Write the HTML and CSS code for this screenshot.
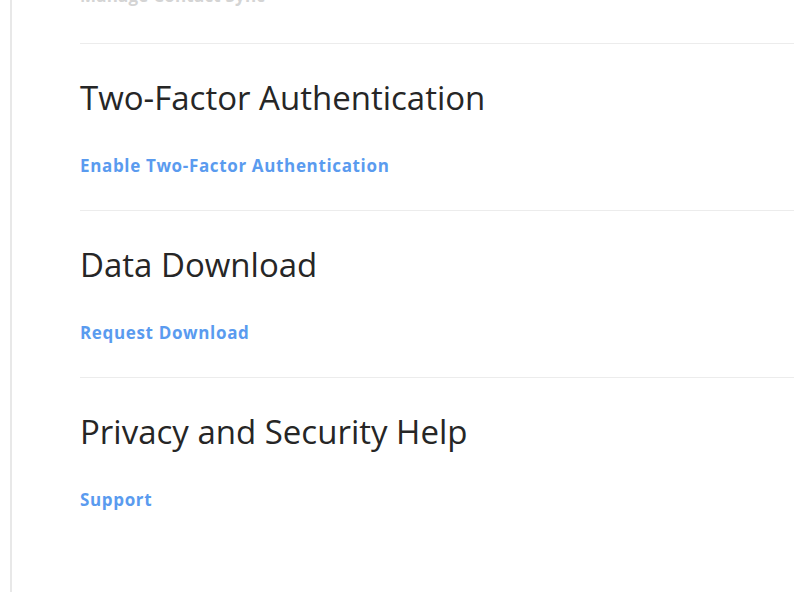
FILE: index.html
```html
<!DOCTYPE html>
<html>
<head>
<meta charset="utf-8">
<link rel="stylesheet" href="styles.css">
</head>
<body>
<div class="page">
  <div class="content">
    <div class="section first">
      <a class="link faded" href="#">Manage Contact Sync</a>
    </div>
    <div class="section">
      <h2 class="title">Two-Factor Authentication</h2>
      <a class="link" href="#">Enable Two-Factor Authentication</a>
    </div>
    <div class="section">
      <h2 class="title">Data Download</h2>
      <a class="link" href="#">Request Download</a>
    </div>
    <div class="section">
      <h2 class="title">Privacy and Security Help</h2>
      <a class="link" href="#">Support</a>
    </div>
  </div>
</div>
</body>
</html>
```
FILE: styles.css
```css
html, body {
  margin: 0;
  padding: 0;
  background: #fff;
  overflow: hidden;
}
body {
  font-family: "Open Sans", "Noto Sans", sans-serif;
}
.page {
  margin-left: 10px;
  border-left: 2px solid #e8e8e8;
  height: 592px;
  overflow: hidden;
  padding-left: 68px;
  padding-right: 6px;
}
.content {
  margin-top: -16px;
}
.section {
  border-top: 1px solid #ececec;
  padding: 34px 0 32px;
}
.section.first {
  border-top: none;
  padding: 0 0 35px;
}
.title {
  margin: 0 0 36px;
  font-size: 33px;
  line-height: 40px;
  font-weight: 400;
  color: #262626;
}
.link {
  display: block;
  font-size: 17px;
  line-height: 24px;
  font-weight: 700;
  letter-spacing: 0.65px;
  color: #5a9bef;
  text-decoration: none;
}
.link.faded {
  color: #d4d4d4;
  letter-spacing: 0.2px;
}
```
